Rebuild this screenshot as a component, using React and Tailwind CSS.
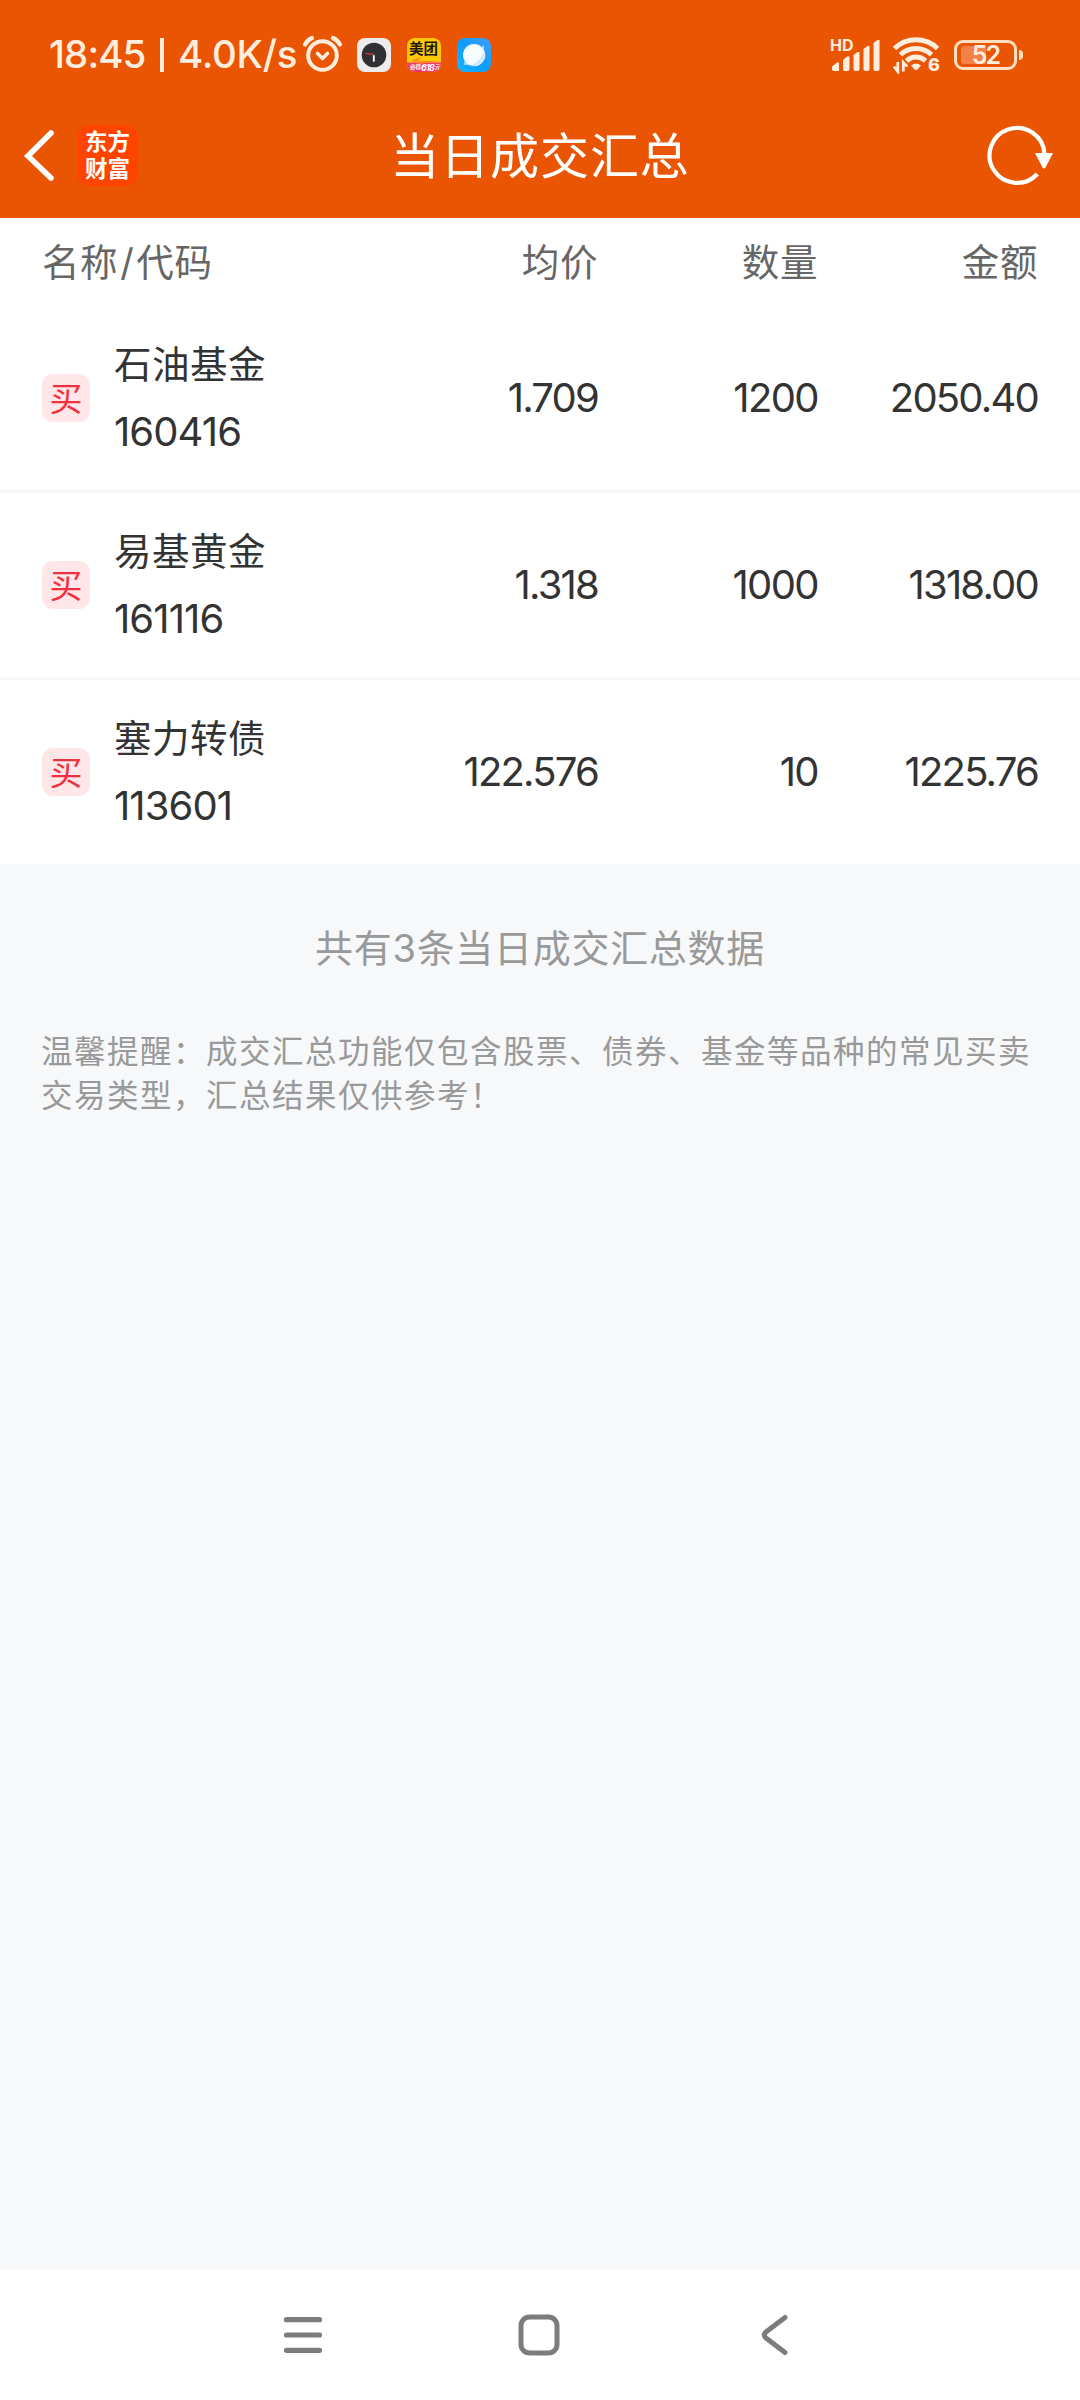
import React from 'react';

const trades = [
  { id: 1, name: '石油基金', code: '160416', price: '1.709', amount: '1200', total: '2050.40' },
  { id: 2, name: '易基黄金', code: '161116', price: '1.318', amount: '1000', total: '1318.00' },
  { id: 3, name: '塞力转债', code: '113601', price: '122.576', amount: '10', total: '1225.76' },
];

const AlarmIcon = () => (
  <svg width="42" height="40" viewBox="0 0 42 40" fill="none" stroke="#ffeedd" strokeLinecap="round">
    <circle cx="20.5" cy="20.5" r="14.3" strokeWidth="4" />
    <path d="M15.5 18.5l5 5 5-5" strokeWidth="3.6" strokeLinejoin="round" />
    <path d="M3 9.5Q5.500 5 10 3M31 3Q35.500 5 38 9.500" strokeWidth="4.2" />
  </svg>
);

const ClockAppIcon = () => (
  <svg width="34" height="34" viewBox="0 0 34 34">
    <rect width="34" height="34" rx="8" fill="#ececec" />
    <circle cx="17" cy="17" r="12.3" fill="#2f3033" />
    <path d="M8.500 15.300l8.500 1.200" stroke="#c8433a" strokeWidth="1.3" />
    <path d="M16.800 17.200v6.500" stroke="#fff" strokeWidth="1.8" />
  </svg>
);

const MeituanIcon = () => (
  <div className="relative w-[34px] h-[34px] rounded-lg overflow-hidden bg-[#ffc808]">
    <svg className="absolute inset-0" width="34" height="34" viewBox="0 0 34 34">
      <path d="M0 24.500h34v10H0z" fill="#f5386f" />
      <path d="M5 22l9-2.500-2.500 3.500H34L11 26l1.500-2.500H5z" fill="#ff8a1c" />
    </svg>
    <span className="absolute left-[2px] top-[1px] text-[14.5px] leading-[20px] font-bold text-[#20180a] whitespace-nowrap">美团</span>
    <span className="absolute left-[3px] top-[25px] flex items-center text-[5.500px] leading-[9px] font-bold text-white whitespace-nowrap">
      必得<span className="text-[9px] italic tracking-[-0.9px] pr-px">618</span>元
    </span>
  </div>
);

const BrowserIcon = () => (
  <svg width="34" height="34" viewBox="0 0 34 34">
    <defs>
      <linearGradient id="browserBg" x1="0" y1="1" x2="1" y2="0">
        <stop offset="0" stopColor="#18b4ff" />
        <stop offset="0.5" stopColor="#0b9dfc" />
        <stop offset="1" stopColor="#4a9df5" />
      </linearGradient>
    </defs>
    <rect width="34" height="34" rx="8" fill="url(#browserBg)" />
    <path d="M27 7v11L17 27H7q0-3 1-5z" fill="#8fd8fe" />
    <circle cx="17" cy="17" r="11" fill="#f5fbff" />
    <path d="M27.500 13A11 11 0 0 1 14 27.600q9-4 13.500-14.600z" fill="#cdebfd" />
  </svg>
);

const SignalIcon = () => (
  <div className="relative w-[50px] h-[36px]">
    <span className="absolute left-0 top-0 text-[16px] leading-[16px] font-bold">HD</span>
    <svg width="50" height="36" viewBox="0 0 50 36" fill="#ffeedd">
      <path d="M2 29.500l5-4h2V34H4a2 2 0 0 1-2-2z" />
      <path d="M13 23l4-3.500h2.500V32a2 2 0 0 1-2 2H15a2 2 0 0 1-2-2z" />
      <path d="M23.500 18l4-3h2V32a2 2 0 0 1-2 2h-2a2 2 0 0 1-2-2z" />
      <path d="M33.500 12l4-3h2V32a2 2 0 0 1-2 2h-2a2 2 0 0 1-2-2z" />
      <path d="M43.500 6l4-3h2V32a2 2 0 0 1-2 2h-2a2 2 0 0 1-2-2z" />
    </svg>
  </div>
);

const WifiIcon = () => (
  <div className="relative w-[48px] h-[38px]">
    <svg width="48" height="38" viewBox="0 0 48 38" fill="none" stroke="#ffeedd" strokeWidth="5">
      <path d="M1.500 12.500a31 31 0 0 1 43 0" />
      <path d="M7.500 18.700a22.500 22.500 0 0 1 31 0" />
      <path d="M13.500 24.800a14 14 0 0 1 19 0" />
      <path d="M18 29.500q5-4 10 0l-3.500 4q-1.500 1.200-3 0z" fill="#ffeedd" stroke="none" />
      <path d="M4.800 26v9.500L1 30.500M10.300 35.500V26.500l4 4" strokeWidth="2.8" />
    </svg>
    <span className="absolute left-[35px] top-[20px] text-[18px] leading-[18px] font-extrabold">6</span>
  </div>
);

const Battery = () => (
  <div className="flex items-center gap-[2px]">
    <div className="relative flex items-center justify-center w-[63px] h-[30px] border-[3px] border-[#ffe0c0] rounded-[9px]">
      <div className="absolute left-[4px] top-[3px] w-[25px] h-[18px] rounded-l-[3px] bg-[#f28247]" />
      <span className="relative text-[25px] leading-[24px] font-semibold tracking-[-2px]">52</span>
    </div>
    <div className="w-1 h-[10px] rounded-r-sm bg-[#ffe0c0]" />
  </div>
);

const StatusBar = () => (
  <div className="flex items-center h-[92px] pt-[17px] pl-[49px] pr-[57px] text-[#ffeedd] font-medium">
    <div className="flex items-center text-[38.5px] leading-none whitespace-pre">
      <span className="w-[96px] tracking-[-0.9px]">18:45</span>
      <span className="w-[4px] h-[34px] ml-[15px] bg-[#ffeedd]" />
      <span className="w-[120px] ml-[14px] tracking-[-0.3px]">4.0K/s</span>
    </div>
    <div className="flex items-center ml-[4px]">
      <AlarmIcon />
      <div className="flex gap-4 ml-[13px]">
        <ClockAppIcon />
        <MeituanIcon />
        <BrowserIcon />
      </div>
    </div>
    <div className="flex items-center ml-auto">
      <SignalIcon />
      <div className="ml-[13px] mr-[13px]">
        <WifiIcon />
      </div>
      <Battery />
    </div>
  </div>
);

const TitleBar = () => (
  <div className="grid grid-cols-[1fr_auto_1fr] items-center h-[126px] pl-[22px] pr-[25px] text-white">
    <div className="flex items-center">
      <svg width="34" height="54" viewBox="0 0 34 54" fill="none" stroke="#fff" strokeWidth="5.6" strokeLinecap="round">
        <path d="M29 5L6 28l23 22" />
      </svg>
      <div className="flex flex-col items-center justify-center w-[61px] h-[61px] ml-[21px] rounded-[13px] bg-[#ff4400] text-[22.5px] leading-[27px] font-bold pb-px">
        <span>东方</span>
        <span>财富</span>
      </div>
    </div>
    <h1 className="pt-[3px] pl-[3px] text-[49px] leading-[60px] tracking-[0.9px] font-normal">当日成交汇总</h1>
    <div className="flex justify-end">
      <svg width="68" height="64" viewBox="0 0 68 64" fill="none">
        <path d="M57.500 31A27.500 27.500 0 1 0 50.300 51" stroke="#fff" strokeWidth="4.200" />
        <path d="M48 30h18l-7.500 14.500q-1.500 2-3 0z" fill="#fff" />
      </svg>
    </div>
  </div>
);

const TradeRow = ({ trade }) => (
  <div className="grid grid-cols-[1fr_220px_220px_220px] items-center h-[184px] px-10 text-[#333] text-[40px] tracking-[-1.8px] text-right">
    <div className="flex items-center text-left">
      <div className="flex items-center justify-center w-12 h-12 ml-[2px] rounded-[11px] bg-[#ffe6e8] text-[#f0303f] text-[33px] leading-none tracking-normal">
        <span className="pt-[2px]">买</span>
      </div>
      <div className="ml-[24px]">
        <p className="text-[37.5px] leading-[67px] tracking-[0.500px]">{trade.name}</p>
        <p className="leading-[67px] tracking-[-0.900px]">{trade.code}</p>
      </div>
    </div>
    <span className="pr-[2px]">{trade.price}</span>
    <span className="pr-[2px] tracking-[-1.6px]">{trade.amount}</span>
    <span className="pr-[2px]">{trade.total}</span>
  </div>
);

const NavBar = () => (
  <div className="flex items-center justify-center gap-[194px] h-[130px] pr-[3px] bg-white">
    <svg width="42" height="42" viewBox="0 0 42 42" stroke="#7c7c7c" strokeWidth="5.200" strokeLinecap="round">
      <path d="M4.500 5.700h33M4.500 21h33M4.500 36.300h33" />
    </svg>
    <svg width="42" height="42" viewBox="0 0 42 42" fill="none" stroke="#7c7c7c" strokeWidth="5">
      <rect x="3" y="3" width="36" height="36" rx="8.500" />
    </svg>
    <svg width="42" height="42" viewBox="0 0 42 42" fill="none" stroke="#7c7c7c" strokeWidth="5" strokeLinecap="round">
      <path d="M31 3.500L12 18q-3.500 3 0 6l19 14.500" />
    </svg>
  </div>
);

const App = () => {
  return (
    <div className="flex flex-col w-[1080px] h-[2400px] overflow-hidden bg-[#f7f8fa] font-[Inter,'Noto_Sans_CJK_SC',sans-serif]">
      <header className="bg-[#ea5504]">
        <StatusBar />
        <TitleBar />
      </header>

      <main className="flex-1">
        <section className="bg-white">
          <div className="grid grid-cols-[1fr_220px_220px_220px] items-center h-[88px] pt-[2px] px-10 text-[37.5px] tracking-[0.600px] text-[#666] text-right">
            <span className="text-left pl-[2px]">
              名称<span className="mx-[2px]">/</span>代码
            </span>
            <span className="pr-[2px]">均价</span>
            <span className="pr-[2px]">数量</span>
            <span className="pr-[2px]">金额</span>
          </div>
          <div className="flex flex-col gap-[3px] bg-[#f7f8f8]">
            {trades.map((trade) => (
              <div key={trade.id} className="bg-white">
                <TradeRow trade={trade} />
              </div>
            ))}
          </div>
        </section>

        <p className="mt-[57px] text-center text-[38px] leading-[54px] tracking-[0.700px] text-[#999]">
          共有{trades.length}条当日成交汇总数据
        </p>
        <p className="mt-[55px] px-[41px] text-[31.5px] leading-[43.500px] tracking-[1.500px] text-[#999]">
          温馨提醒：成交汇总功能仅包含股票、债券、基金等品种的常见买卖
          <br />
          交易类型，汇总结果仅供参考！
        </p>
      </main>

      <NavBar />
    </div>
  );
};

export default App;
